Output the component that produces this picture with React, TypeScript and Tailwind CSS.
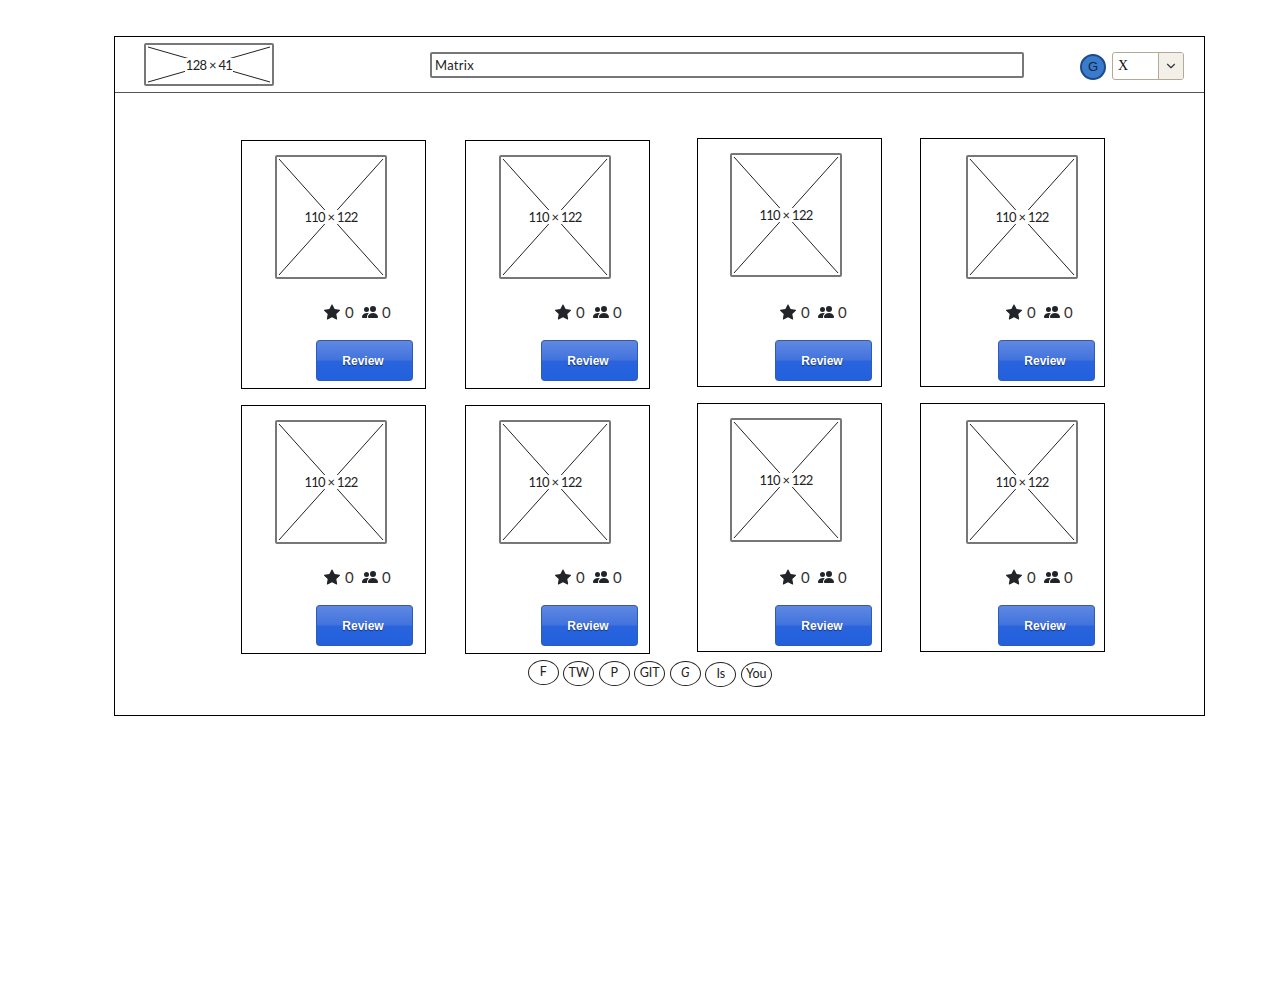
import { BsStarFill, BsPeopleFill } from 'react-icons/bs'
import { ChevronDown } from 'lucide-react'

interface CardProps {
  imgClass: string
  statsClass: string
  btnClass: string
}

function Placeholder({ label, className, w, h }: { label: string; className: string; w: number; h: number }) {
  return (
    <div className={`relative border-2 border-[#777] rounded-[2px] bg-white ${className}`}>
      <svg width="100%" height="100%" viewBox={`0 0 ${w} ${h}`} className="block">
        <line x1="2" y1="2" x2={w - 2} y2={h - 2} stroke="#222" strokeWidth="1" />
        <line x1={w - 2} y1="2" x2="2" y2={h - 2} stroke="#222" strokeWidth="1" />
      </svg>
      <div className="absolute inset-0 flex items-center justify-center">
        <span className="bg-white px-px text-[13px] tracking-[-0.7px] leading-[14px] text-[#222] font-['Lato',sans-serif]">{label}</span>
      </div>
    </div>
  )
}

function Card({ imgClass, statsClass, btnClass }: CardProps) {
  return (
    <div className="w-[185px] h-[249px] border border-black bg-white">
      <Placeholder label="110 × 122" className={`w-[112px] h-[124px] ${imgClass}`} w={108} h={120} />
      <div className={`flex items-center h-[18px] text-[#212529] ${statsClass}`}>
        <BsStarFill size={16} />
        <span className="ml-[5px] w-[17px] text-[15px] leading-[18px] text-[#333] font-['Lato',sans-serif]">0</span>
        <BsPeopleFill size={16} />
        <span className="ml-[4px] text-[15px] leading-[18px] text-[#333] font-['Lato',sans-serif]">0</span>
      </div>
      <button
        className={`block w-[97px] h-[41px] mt-[19px] pr-[3px] pt-px rounded-[4px] border border-[#2c5bb8] border-t-[#3d5a94] bg-[linear-gradient(#5f88e2,#4273dd_48%,#2a64dd_52%,#2260dd)] text-white text-[12px] font-bold font-['Liberation_Sans',sans-serif] [text-shadow:0_1px_1px_#14316e] ${btnClass}`}
      >
        Review
      </button>
    </div>
  )
}

const links = [
  { label: 'F', cls: 'mt-0' },
  { label: 'TW', cls: 'mt-px' },
  { label: 'P', cls: 'mt-px' },
  { label: 'GIT', cls: 'mt-px' },
  { label: 'G', cls: 'mt-px italic' },
  { label: 'Is', cls: 'mt-[2px]' },
  { label: 'You', cls: 'mt-[2px]' },
]

export default function App() {
  return (
    <div className="min-h-[1000px] bg-white pt-9 pl-[114px]">
      <div className="w-[1091px] h-[680px] border border-black">
        <header className="flex items-start h-[56px] border-b border-[#555]">
          <Placeholder label="128 × 41" className="w-[130px] h-[43px] mt-[6px] ml-[29px]" w={126} h={39} />
          <input
            readOnly
            value="Matrix"
            className="w-[594px] h-[26px] mt-[15px] ml-[156px] px-[3px] pb-px border-2 border-[#777] rounded-[2px] text-[13px] tracking-[0.3px] text-[#222] font-['Lato',sans-serif] outline-none"
          />
          <div className="flex items-center justify-center w-[26px] h-[26px] mt-[17px] ml-[56px] rounded-full border-2 border-[#1d4a8c] bg-[#3b7bcb] text-[13px] text-[#10243f] font-['Liberation_Sans',sans-serif]">
            G
          </div>
          <div className="flex w-[72px] h-[28px] mt-[15px] ml-[6px] rounded-[3px] border border-[#b3a999] overflow-hidden">
            <span className="flex-1 pl-[5px] text-[14px] leading-[26px] text-[#111] font-['Liberation_Serif',serif]">X</span>
            <span className="flex items-center justify-center w-[25px] border-l border-[#b3a999] bg-[#f3f0e9]">
              <ChevronDown size={14} color="#333" />
            </span>
          </div>
        </header>

        <div className="flex ml-[126px]">
          <div className="flex flex-col gap-4 mt-[47px]">
            <Card imgClass="ml-[33px] mt-[14px]" statsClass="ml-[82px] mt-[24px]" btnClass="ml-[74px]" />
            <Card imgClass="ml-[33px] mt-[14px]" statsClass="ml-[82px] mt-[24px]" btnClass="ml-[74px]" />
          </div>
          <div className="flex flex-col gap-4 mt-[47px] ml-[39px]">
            <Card imgClass="ml-[33px] mt-[14px]" statsClass="ml-[89px] mt-[24px]" btnClass="ml-[75px]" />
            <Card imgClass="ml-[33px] mt-[14px]" statsClass="ml-[89px] mt-[24px]" btnClass="ml-[75px]" />
          </div>
          <div className="flex flex-col gap-4 mt-[45px] ml-[47px]">
            <Card imgClass="ml-[32px] mt-[14px]" statsClass="ml-[82px] mt-[26px]" btnClass="ml-[77px]" />
            <Card imgClass="ml-[32px] mt-[14px]" statsClass="ml-[82px] mt-[26px]" btnClass="ml-[77px]" />
          </div>
          <div className="flex flex-col gap-4 mt-[45px] ml-[38px]">
            <Card imgClass="ml-[45px] mt-[16px]" statsClass="ml-[85px] mt-[24px]" btnClass="ml-[77px]" />
            <Card imgClass="ml-[45px] mt-[16px]" statsClass="ml-[85px] mt-[24px]" btnClass="ml-[77px]" />
          </div>
        </div>

        <div className="flex gap-[4.5px] ml-[412.75px] mt-[6px]">
          {links.map((l) => (
            <div
              key={l.label}
              className={`flex items-center justify-center w-[31px] h-[25px] rounded-[50%] border border-[#222] text-[12.5px] text-[#222] font-['Lato',sans-serif] ${l.cls}`}
            >
              {l.label}
            </div>
          ))}
        </div>
      </div>
    </div>
  )
}
